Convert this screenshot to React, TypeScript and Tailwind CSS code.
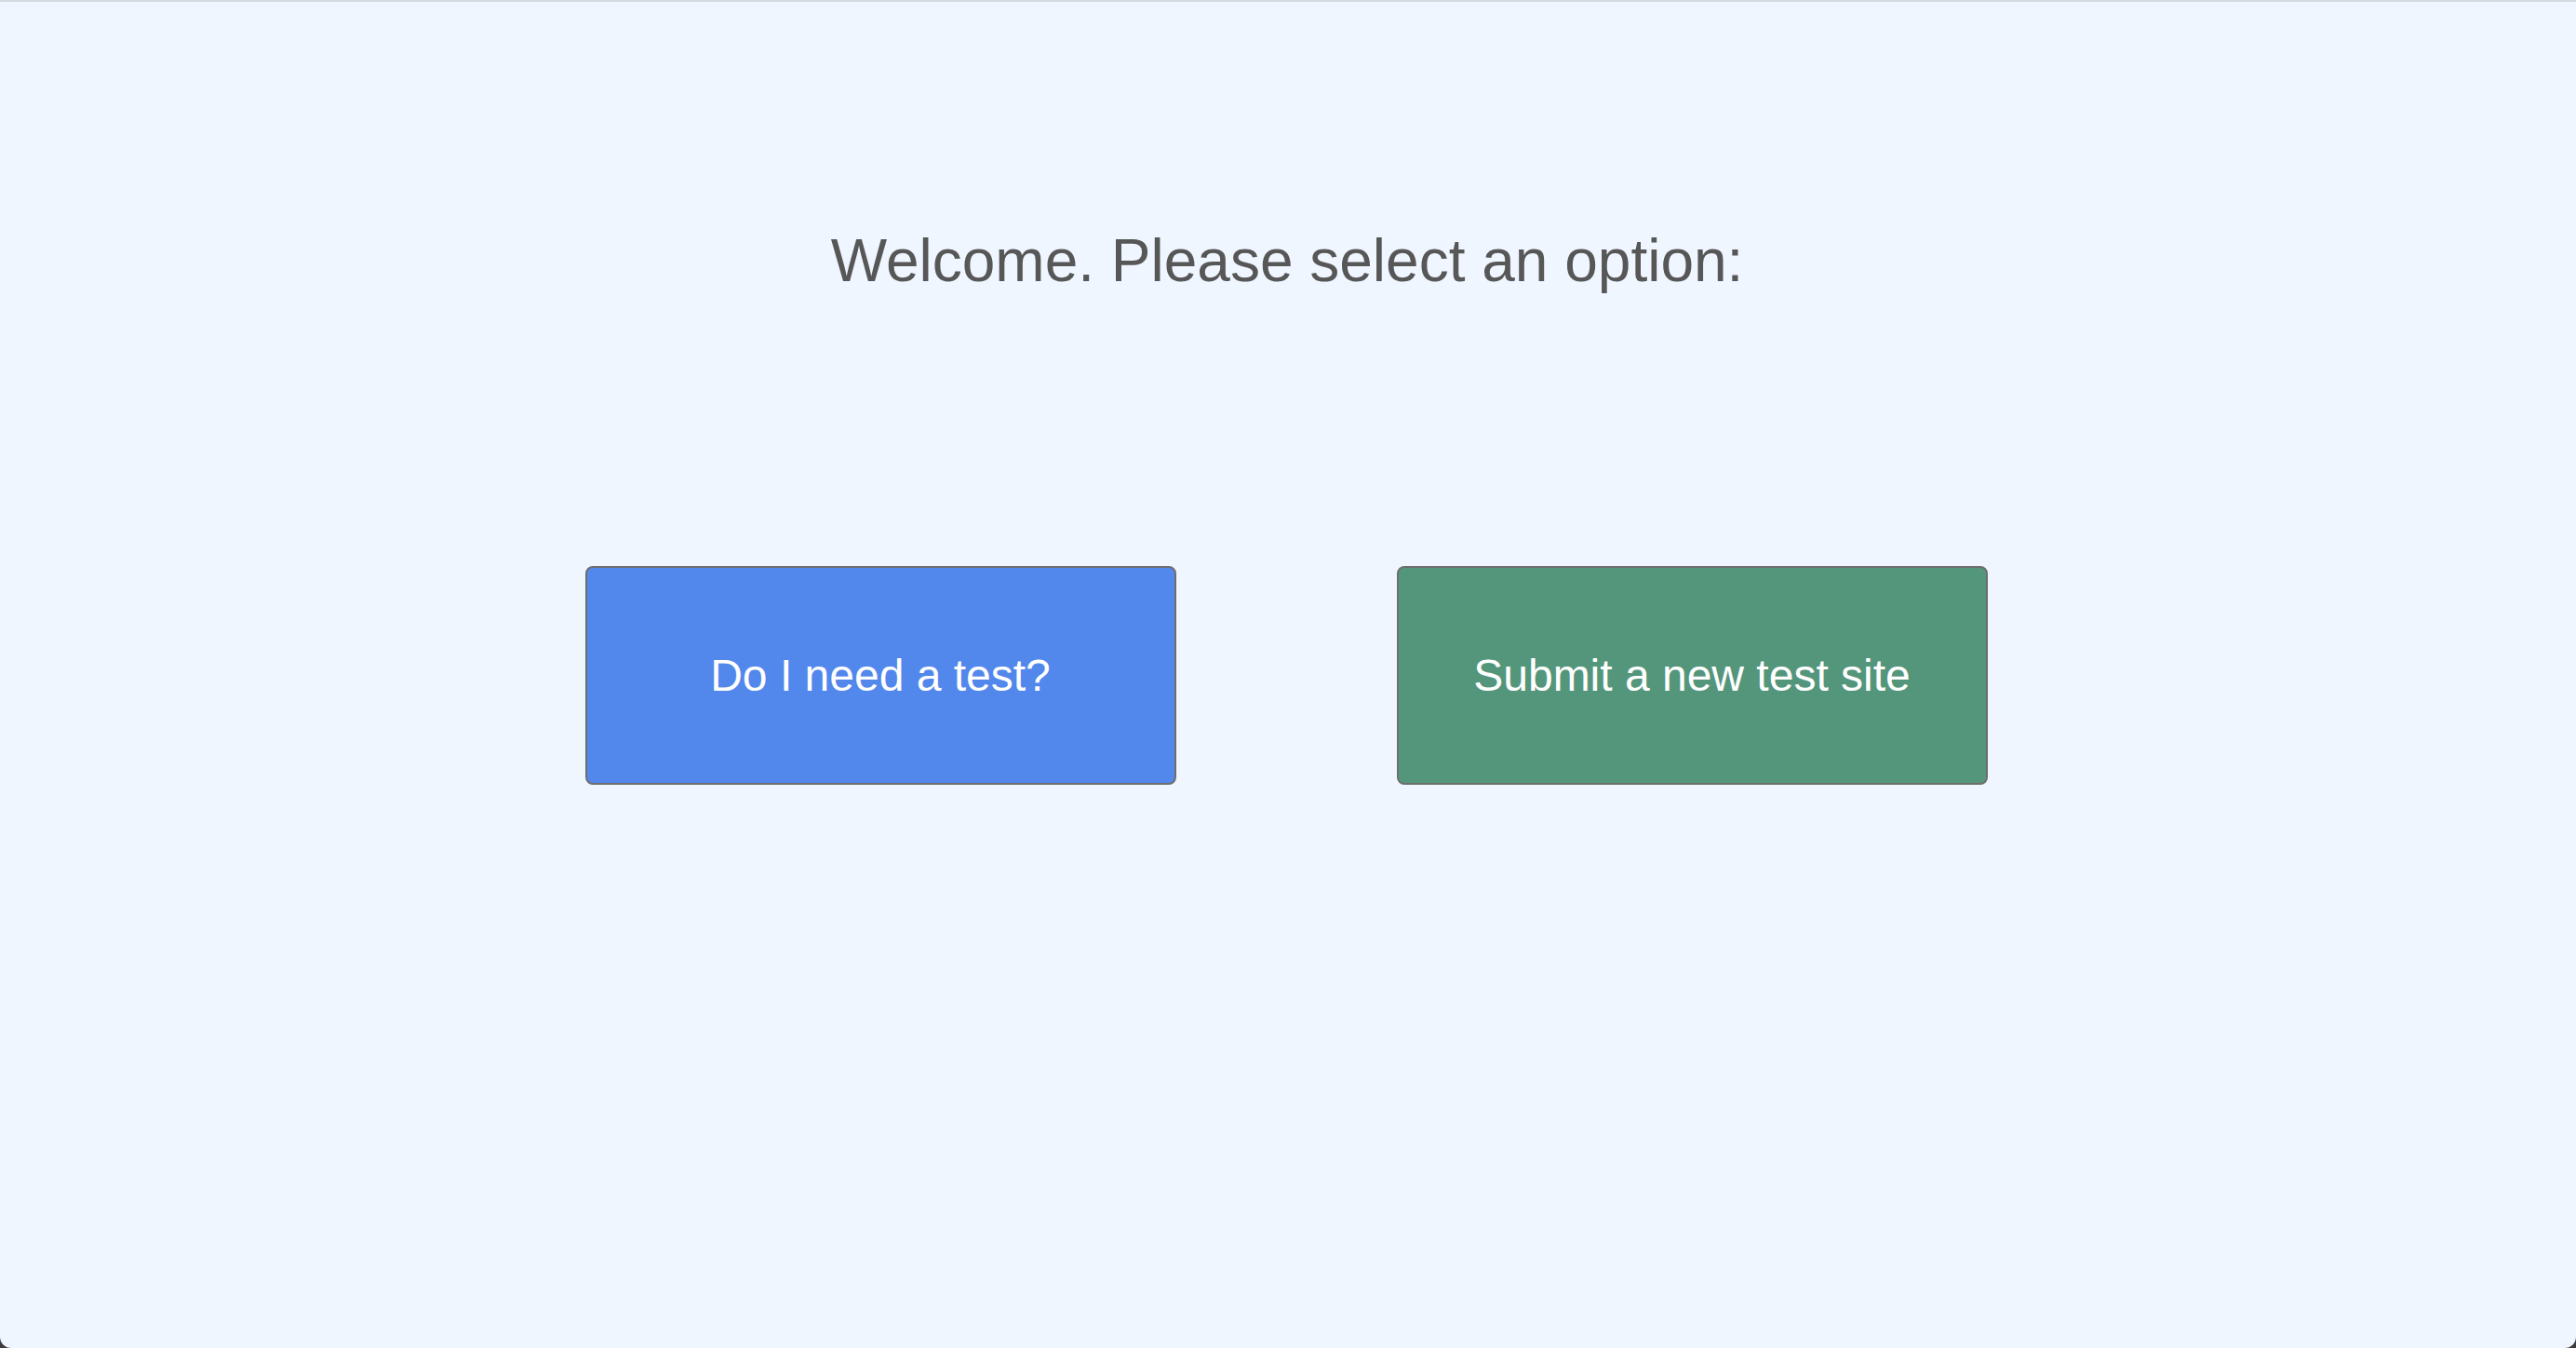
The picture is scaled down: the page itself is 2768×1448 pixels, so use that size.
import React from 'react';

const options = [
  { label: 'Do I need a test?', color: 'bg-[#5287ec]' },
  { label: 'Submit a new test site', color: 'bg-[#54967b]' },
];

const App: React.FC = () => {
  return (
    <div className="h-[1448px] bg-[#3c3c3c]" style={{ fontFamily: '"Liberation Sans", Arial, sans-serif' }}>
      <div className="h-full flex flex-col items-center bg-[#eff6ff] border-t-2 border-[#d5dae1] rounded-b-[12px]">
        <h1 className="mt-[246px] mr-[2px] text-[64px] leading-none text-[#575757]">Welcome. Please select an option:</h1>
        <div className="mt-[296px] mr-[4px] flex gap-[237px]">
          {options.map((o) => (
            <button
              key={o.label}
              className={`${o.color} w-[635px] h-[235px] flex items-center justify-center rounded-[8px] border-2 border-[#6e6e6e] text-white text-[48px]`}
            >
              {o.label}
            </button>
          ))}
        </div>
      </div>
    </div>
  );
};

export default App;
